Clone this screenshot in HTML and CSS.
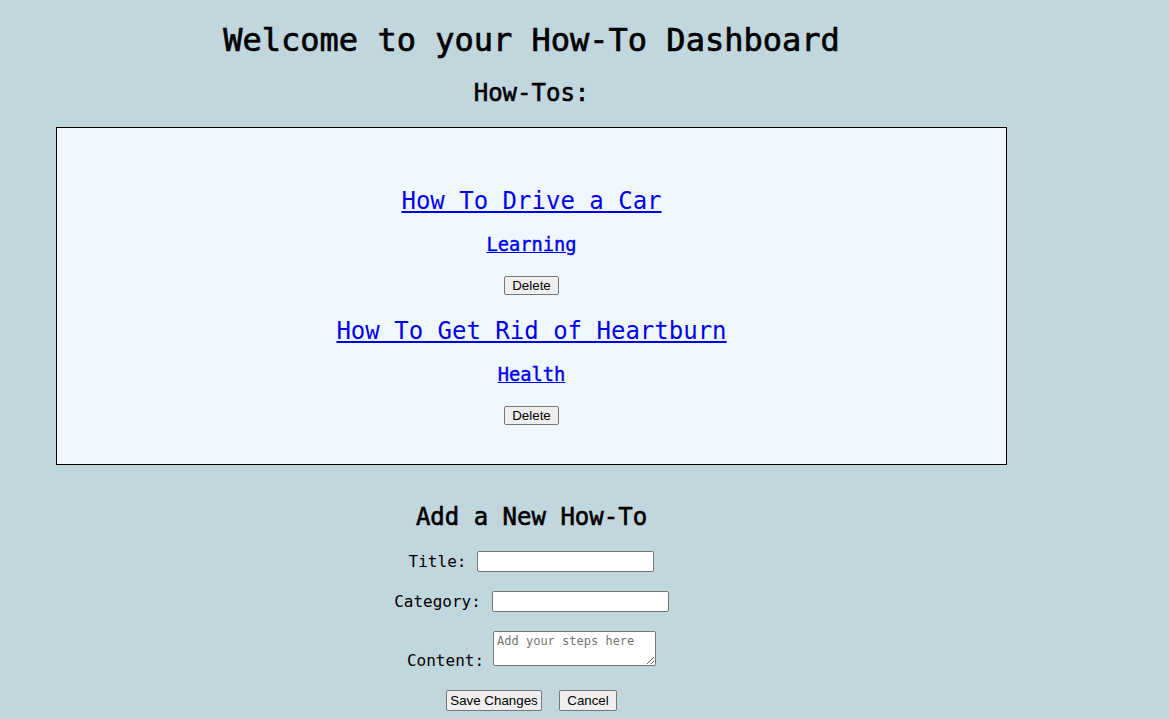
FILE: index.html
```html
<!DOCTYPE html>
<html lang="en">
<head>
<meta charset="utf-8">
<title>How-To Dashboard</title>
<link rel="stylesheet" href="styles.css">
</head>
<body>
<div class="app">
  <h1 class="title">Welcome to your How-To Dashboard</h1>
  <h2 class="section-title">How-Tos:</h2>
  <div class="list-box">
    <div class="item">
      <h2 class="item-title"><a href="#">How To Drive a Car</a></h2>
      <h3 class="item-cat"><a href="#">Learning</a></h3>
      <div class="item-actions"><button class="btn btn-delete">Delete</button></div>
    </div>
    <div class="item">
      <h2 class="item-title"><a href="#">How To Get Rid of Heartburn</a></h2>
      <h3 class="item-cat"><a href="#">Health</a></h3>
      <div class="item-actions"><button class="btn btn-delete">Delete</button></div>
    </div>
  </div>
  <form class="add-form">
    <h2 class="form-title">Add a New How-To</h2>
    <div class="row row-title"><label>Title:</label><input type="text" class="field"></div>
    <div class="row row-cat"><label>Category:</label><input type="text" class="field"></div>
    <div class="row row-content"><label>Content:</label><textarea class="area" placeholder="Add your steps here"></textarea></div>
    <div class="row row-buttons"><button type="button" class="btn btn-save">Save Changes</button><button type="button" class="btn btn-cancel">Cancel</button></div>
  </form>
</div>
</body>
</html>
```
FILE: styles.css
```css
html, body {
  background: #c2d6de;
}
body {
  margin: 0;
  padding: 8px;
  font-family: "DejaVu Sans Mono", "Liberation Mono", monospace;
  color: #000;
}
.app {
  width: 1047px;
  text-align: center;
}
.title {
  font-size: 32px;
  line-height: 38px;
  font-weight: normal;
  -webkit-text-stroke: 0.7px #000;
  margin: 13px 0 0;
}
.section-title {
  font-size: 24px;
  line-height: 28px;
  font-weight: normal;
  -webkit-text-stroke: 0.6px #000;
  margin: 20px 0 0;
}
.list-box {
  margin: 20px 48px 0 48px;
  background: #f0f8ff;
  border: 1px solid #000;
  padding: 38px 0 39px;
}
.item-title {
  font-size: 24px;
  line-height: 28px;
  font-weight: normal;
  margin: 21px 0 0;
}
.item + .item .item-title {
  margin-top: 22px;
}
.item-title a,
.item-cat a {
  color: #0000ee;
  text-decoration: underline;
}
.item-cat {
  font-size: 18.72px;
  line-height: 22px;
  font-weight: normal;
  -webkit-text-stroke: 0.4px #0000ee;
  margin: 19px 0 0;
}
.item-actions {
  margin-top: 20px;
  display: flex;
  justify-content: center;
}
.btn {
  font-family: "Liberation Sans", Arial, sans-serif;
  font-size: 13.33px;
  color: #000;
  background: #efefef;
  border: 1px solid #767676;
  border-radius: 2px;
  padding: 0;
  margin: 0;
  box-sizing: border-box;
}
.btn-delete {
  width: 55px;
  height: 19px;
}
.add-form {
  margin-top: 38px;
}
.form-title {
  font-size: 24px;
  line-height: 28px;
  font-weight: normal;
  -webkit-text-stroke: 0.6px #000;
  margin: 0;
}
.row {
  display: flex;
  justify-content: center;
  align-items: center;
  gap: 11px;
  font-size: 16px;
}
.row label {
  line-height: 20px;
}
.row-title {
  margin-top: 20px;
}
.row-cat {
  margin-top: 19px;
}
.row-content {
  margin-top: 19px;
  align-items: flex-end;
  gap: 9px;
}
.row-content label {
  line-height: 10px;
}
.row-buttons {
  margin-top: 24px;
  gap: 17px;
}
.field {
  width: 177px;
  height: 21px;
  box-sizing: border-box;
  border: 1px solid #767676;
  border-radius: 2px;
  background: #fff;
  margin: 0;
  padding: 1px 2px;
}
.area {
  width: 163px;
  height: 35px;
  box-sizing: border-box;
  border: 1px solid #767676;
  border-radius: 2px;
  background: #fff;
  margin: 0;
  padding: 2px 3px;
  font-family: "DejaVu Sans Mono", "Liberation Mono", monospace;
  font-size: 12px;
  line-height: 14px;
}
.area::placeholder {
  color: #757575;
}
.btn-save {
  width: 96px;
  height: 21px;
}
.btn-cancel {
  width: 58px;
  height: 21px;
}
```
